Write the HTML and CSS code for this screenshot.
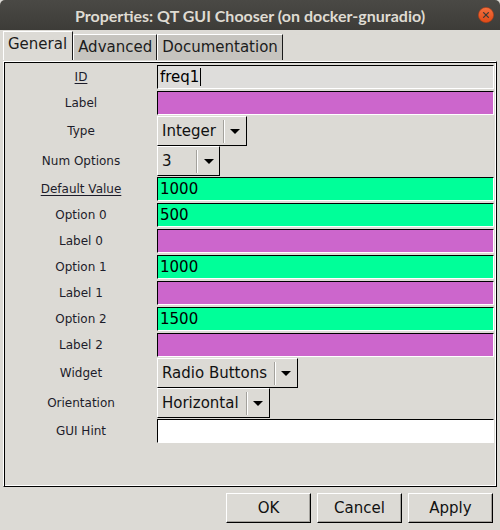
FILE: index.html
```html
<!DOCTYPE html>
<html>
<head>
<meta charset="utf-8">
<link rel="stylesheet" href="styles.css">
</head>
<body>
<div class="window">
  <div class="titlebar">
    <span></span>
    <span class="title">Properties: QT GUI Chooser (on docker-gnuradio)</span>
    <span class="close">
      <svg width="16" height="16" viewBox="0 0 16 16">
        <defs>
          <linearGradient id="cg" x1="0" y1="0" x2="0" y2="1">
            <stop offset="0" stop-color="#f4703f"/>
            <stop offset="1" stop-color="#df4a17"/>
          </linearGradient>
        </defs>
        <circle cx="8" cy="8" r="7.6" fill="url(#cg)" stroke="#b83c12" stroke-width="0.6"/>
        <path d="M5.6 5.6 L10.4 10.4 M10.4 5.6 L5.6 10.4" stroke="#3c3b37" stroke-width="1.3" stroke-linecap="round"/>
      </svg>
    </span>
  </div>

  <div class="tabs">
    <div class="tab tab-active">General</div>
    <div class="tab">Advanced</div>
    <div class="tab">Documentation</div>
  </div>

  <div class="panel">
    <div class="form">
      <div class="lbl"><u>ID</u></div>
      <div class="cell"><div class="entry entry-plain">freq1<span class="caret"></span></div></div>

      <div class="lbl">Label</div>
      <div class="cell"><div class="entry entry-str"></div></div>

      <div class="lbl">Type</div>
      <div class="cell"><div class="combo"><span class="combo-val">Integer</span><span class="combo-sep"></span><span class="combo-arrow"></span></div></div>

      <div class="lbl">Num Options</div>
      <div class="cell"><div class="combo"><span class="combo-val combo-val-wide">3</span><span class="combo-sep"></span><span class="combo-arrow"></span></div></div>

      <div class="lbl"><u>Default Value</u></div>
      <div class="cell"><div class="entry entry-num">1000</div></div>

      <div class="lbl">Option 0</div>
      <div class="cell"><div class="entry entry-num">500</div></div>

      <div class="lbl">Label 0</div>
      <div class="cell"><div class="entry entry-str"></div></div>

      <div class="lbl">Option 1</div>
      <div class="cell"><div class="entry entry-num">1000</div></div>

      <div class="lbl">Label 1</div>
      <div class="cell"><div class="entry entry-str"></div></div>

      <div class="lbl">Option 2</div>
      <div class="cell"><div class="entry entry-num">1500</div></div>

      <div class="lbl">Label 2</div>
      <div class="cell"><div class="entry entry-str"></div></div>

      <div class="lbl">Widget</div>
      <div class="cell"><div class="combo"><span class="combo-val">Radio Buttons</span><span class="combo-sep"></span><span class="combo-arrow"></span></div></div>

      <div class="lbl">Orientation</div>
      <div class="cell"><div class="combo"><span class="combo-val">Horizontal</span><span class="combo-sep"></span><span class="combo-arrow"></span></div></div>

      <div class="lbl">GUI Hint</div>
      <div class="cell"><div class="entry entry-white"></div></div>
    </div>
  </div>

  <div class="buttons">
    <div class="btn">OK</div>
    <div class="btn">Cancel</div>
    <div class="btn">Apply</div>
  </div>
</div>
</body>
</html>
```

FILE: styles.css
```css
html, body {
  margin: 0;
  padding: 0;
}

body {
  width: 500px;
  height: 530px;
  overflow: hidden;
  background: #dcdad5;
  font-family: "DejaVu Sans", sans-serif;
  color: #1c1c1c;
}

.window {
  width: 500px;
  height: 530px;
  background: #dcdad5;
}

/* ---------- title bar ---------- */
.titlebar {
  height: 30px;
  display: grid;
  grid-template-columns: 1fr auto 1fr;
  align-items: center;
  background: linear-gradient(#4a4945, #3d3c38);
  border-radius: 5px 5px 0 0;
}

.title {
  font-family: "Lato", "DejaVu Sans", sans-serif;
  font-weight: 700;
  font-size: 16px;
  color: #dfdbd2;
  white-space: nowrap;
}

.close {
  justify-self: end;
  margin-right: 6px;
  width: 16px;
  height: 16px;
  display: flex;
}

/* ---------- tabs ---------- */
.tabs {
  height: 30px;
  display: flex;
  align-items: flex-end;
  padding-left: 3px;
  box-sizing: border-box;
}

.tab {
  height: 26px;
  box-sizing: border-box;
  padding: 0 4px;
  font-size: 15px;
  line-height: 24px;
  background: #c6c4bf;
  border-top: 1px solid #ffffff;
  border-left: 1px solid #ffffff;
  border-right: 1px solid #1a1a1a;
  color: #1c1c1c;
}

.tab-active {
  height: 29px;
  line-height: 25px;
  background: #dcdad5;
  padding: 0 5px 0 4px;
}

/* ---------- panel ---------- */
.panel {
  margin: 1px 0 0 3px;
  width: 494px;
  height: 426px;
  box-sizing: border-box;
  border: 1px solid;
  border-color: #ffffff #000000 #000000 #ffffff;
  box-shadow: inset 1px 1px 0 #000000, inset -1px -1px 0 #ffffff;
  padding: 2px 2px 0 1px;
}

.form {
  display: grid;
  grid-template-columns: 152px 1fr;
}

.lbl {
  font-size: 12px;
  text-align: center;
  display: flex;
  align-items: center;
  justify-content: center;
  color: #1c1c2a;
}

.lbl u {
  text-decoration-thickness: 1px;
  text-underline-offset: 2px;
}

.cell {
  display: flex;
  align-items: center;
}

/* ---------- entries ---------- */
.entry {
  flex: 1;
  height: 24px;
  margin: 1px 0;
  box-sizing: border-box;
  border: 1px solid;
  border-color: #000000 #ffffff #ffffff #000000;
  padding-left: 2px;
  font-size: 15px;
  line-height: 22px;
  color: #000000;
  display: flex;
  align-items: center;
}

.entry-plain { background: #dedddb; }
.entry-str { background: #cc66cc; }
.entry-num { background: #00ff99; }
.entry-white { background: #ffffff; }

.caret {
  display: inline-block;
  width: 1px;
  height: 18px;
  background: #000000;
  margin-left: 1px;
}

/* ---------- combos ---------- */
.combo {
  height: 30px;
  box-sizing: border-box;
  display: flex;
  align-items: center;
  border: 1px solid;
  border-color: #ffffff #000000 #000000 #ffffff;
  background: #dcdad5;
  font-size: 15px;
  color: #111111;
}

.combo-val {
  padding: 0 7px 0 4px;
  white-space: nowrap;
}

.combo-val-wide {
  min-width: 27px;
}

.combo-sep {
  width: 0;
  height: 23px;
  border-left: 1px solid #a3a19c;
  border-right: 1px solid #ffffff;
}

.combo-arrow {
  width: 21px;
  height: 28px;
  display: flex;
  align-items: center;
  justify-content: center;
}

.combo-arrow::after {
  content: "";
  width: 0;
  height: 0;
  border-left: 5px solid transparent;
  border-right: 5px solid transparent;
  border-top: 5px solid #000000;
}

/* ---------- buttons ---------- */
.buttons {
  display: flex;
  justify-content: flex-end;
  gap: 6px;
  padding: 6px 7px 0 0;
}

.btn {
  width: 85px;
  height: 30px;
  box-sizing: border-box;
  border: 1px solid;
  border-color: #ffffff #000000 #000000 #ffffff;
  box-shadow: inset -1px -1px 0 #a3a19c;
  display: flex;
  align-items: center;
  justify-content: center;
  font-size: 15px;
  color: #111111;
}
```
